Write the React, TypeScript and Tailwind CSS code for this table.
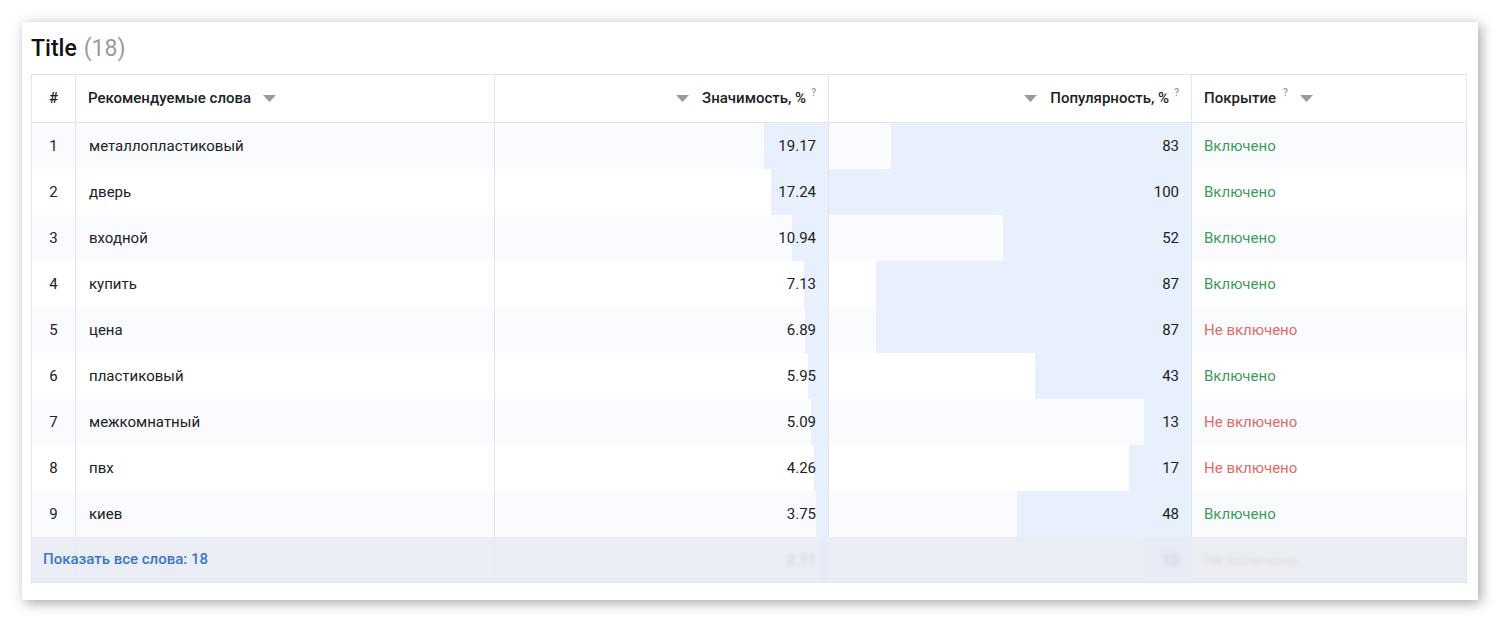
import React from "react";

type Row = { n: number; word: string; sig: number; pop: number; ok: boolean };

const rows: Row[] = [
  { n: 1, word: "металлопластиковый", sig: 19.17, pop: 83, ok: true },
  { n: 2, word: "дверь", sig: 17.24, pop: 100, ok: true },
  { n: 3, word: "входной", sig: 10.94, pop: 52, ok: true },
  { n: 4, word: "купить", sig: 7.13, pop: 87, ok: true },
  { n: 5, word: "цена", sig: 6.89, pop: 87, ok: false },
  { n: 6, word: "пластиковый", sig: 5.95, pop: 43, ok: true },
  { n: 7, word: "межкомнатный", sig: 5.09, pop: 13, ok: false },
  { n: 8, word: "пвх", sig: 4.26, pop: 17, ok: false },
  { n: 9, word: "киев", sig: 3.75, pop: 48, ok: true },
];

const extra: Row = { n: 10, word: "", sig: 2.11, pop: 13, ok: false };

const Caret = () => (
  <svg width="13" height="7" viewBox="0 0 13 7" className="inline-block">
    <path d="M0 0 L13 0 L6.5 7 Z" fill="#9a9a9a" />
  </svg>
);

const Q = () => <span className="text-[10px] text-[#999] relative top-[-7px] font-medium">?</span>;

const grid = "grid grid-cols-[44px_419px_334px_363px_276px]";

function BodyRow({ r, odd, hideLeft }: { r: Row; odd: boolean; hideLeft?: boolean }) {
  return (
    <div className={`${grid} h-[46px] text-[15px] text-[#222] ${odd ? "bg-[#fafbff]" : "bg-white"}`}>
      <div className="flex items-center justify-center border-r border-[#e1e5f0]">{hideLeft ? "" : r.n}</div>
      <div className="flex items-center pl-[13px] border-r border-[#e1e5f0]">{r.word}</div>
      <div className="relative flex items-center justify-end pr-[12px] border-r border-[#e1e5f0]">
        <div className="absolute right-0 top-0 bottom-0 bg-[#e8effd]" style={{ width: `${r.sig}%` }} />
        <span className="relative">{r.sig.toFixed(2)}</span>
      </div>
      <div className="relative flex items-center justify-end pr-[12px] border-r border-[#e1e5f0]">
        <div className="absolute right-0 top-0 bottom-0 bg-[#e8effd]" style={{ width: `${r.pop}%` }} />
        <span className="relative">{r.pop}</span>
      </div>
      <div className={`flex items-center pl-[12px] ${r.ok ? "text-[#3f9a5c]" : "text-[#e06a6a]"}`}>
        {r.ok ? "Включено" : "Не включено"}
      </div>
    </div>
  );
}

export default function App() {
  return (
    <div className="w-[1500px] h-[623px] bg-white pt-[22px] pl-[22px] font-['Roboto',_'Liberation_Sans',_sans-serif]">
      <div className="w-[1456px] h-[578px] bg-white shadow-[3px_3px_12px_rgba(0,0,0,0.35)] pt-[12px] px-[9px]">
        <div className="h-[40px] flex items-start text-[23px] font-medium text-[#111] leading-[29px]">
          Title<span className="ml-[7px] font-normal text-[#9b9b9b]">(18)</span>
        </div>
        <div className="w-[1436px] border border-[#dfe3ef]">
          <div className={`${grid} h-[48px] text-[15px] font-medium text-[#222] border-b border-[#dfe3ef]`}>
            <div className="flex items-center justify-center border-r border-[#e1e5f0]">#</div>
            <div className="flex items-center pl-[12px] gap-[12px] border-r border-[#e1e5f0]">
              Рекомендуемые слова <Caret />
            </div>
            <div className="flex items-center justify-end pr-[12px] border-r border-[#e1e5f0]">
              <span className="mr-[13px] flex"><Caret /></span>
              Значимость, %<span className="ml-[5px]"><Q /></span>
            </div>
            <div className="flex items-center justify-end pr-[12px] border-r border-[#e1e5f0]">
              <span className="mr-[13px] flex"><Caret /></span>
              Популярность, %<span className="ml-[5px]"><Q /></span>
            </div>
            <div className="flex items-center pl-[12px]">
              Покрытие<span className="ml-[7px]"><Q /></span>
              <span className="ml-[12px] flex"><Caret /></span>
            </div>
          </div>
          {rows.map((r, i) => (
            <BodyRow key={r.n} r={r} odd={i % 2 === 0} />
          ))}
          <div className="relative h-[45px] overflow-hidden">
            <div className="blur-[2px] opacity-80">
              <BodyRow r={extra} odd={false} hideLeft />
            </div>
            <div className="absolute inset-0 bg-[rgba(230,233,243,0.8)] flex items-center pl-[11px] text-[15px] font-medium text-[#3b78c4]">
              Показать все слова: 18
            </div>
          </div>
        </div>
      </div>
    </div>
  );
}
